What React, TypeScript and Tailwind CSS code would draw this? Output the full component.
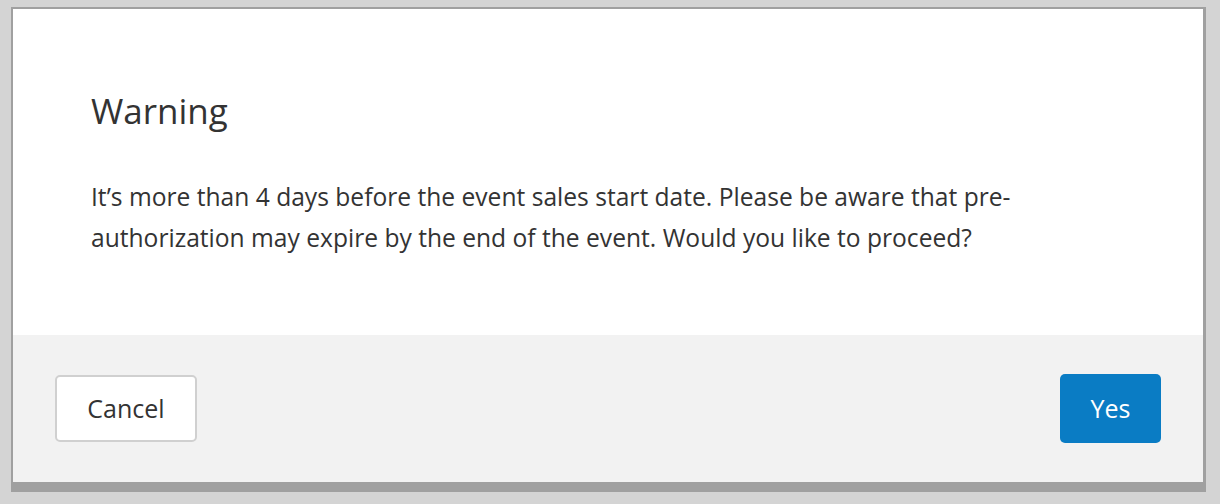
export default function App() {
  return (
    <div className="h-[504px] w-[1220px] bg-[#d4d4d4] pl-[11px] pt-[7px] font-['Open_Sans',sans-serif]">
      <div className="w-[1195px] border-t-2 border-l-2 border-r-[3px] border-b-[10px] border-[#a0a0a0]">
        <div className="h-[326px] bg-white px-[78px] pt-[78px] text-[#333]">
          <h1 className="text-[35px] leading-[48px] font-normal">Warning</h1>
          <p className="mt-[41px] max-w-[960px] text-[24.6px] leading-[41px]">
            It’s more than 4 days before the event sales start date. Please be aware that pre-authorization may expire
            by the end of the event. Would you like to proceed?
          </p>
        </div>
        <div className="flex h-[147px] items-center justify-between bg-[#f2f2f2] px-[42px]">
          <button className="h-[67px] w-[142px] rounded-[5px] border-2 border-[#d0d0d0] bg-white text-[25px] text-[#333]">
            Cancel
          </button>
          <button className="h-[69px] w-[101px] rounded-[5px] bg-[#0a7cc4] text-[25px] text-white">Yes</button>
        </div>
      </div>
    </div>
  );
}
